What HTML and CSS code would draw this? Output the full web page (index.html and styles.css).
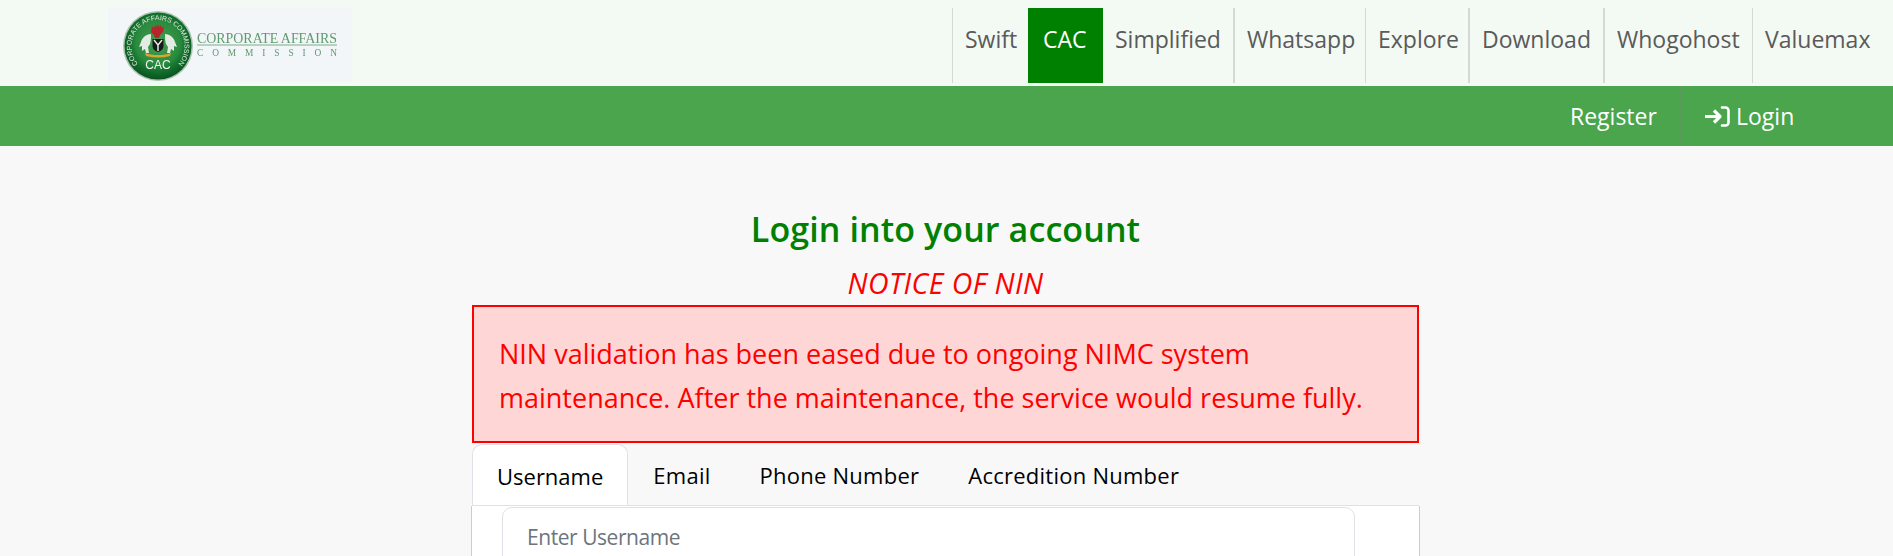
FILE: index.html
```html
<!DOCTYPE html>
<html lang="en">
<head>
<meta charset="utf-8">
<title>Login</title>
<link rel="stylesheet" href="styles.css">
</head>
<body>
<header class="topbar">
  <a class="logo" href="#">
    <svg class="logo-art" viewBox="0 0 244 74" width="244" height="74">
      <defs>
        <radialGradient id="seal" cx="50%" cy="45%" r="55%">
          <stop offset="0" stop-color="#45a052"/>
          <stop offset=".6" stop-color="#2a8a3e"/>
          <stop offset=".78" stop-color="#12702c"/>
          <stop offset="1" stop-color="#0c5222"/>
        </radialGradient>
        <path id="ringtop" d="M 30.5 56.5 A 26.5 26.5 0 1 1 69.5 56.5"/>
      </defs>
      <circle cx="50" cy="38" r="35" fill="#a9c4ae"/>
      <circle cx="50" cy="38" r="33.5" fill="url(#seal)"/>
      <text class="ring" font-size="6.9"><textPath href="#ringtop" startOffset="50%" text-anchor="middle">CORPORATE AFFAIRS COMMISSION</textPath></text>
      <path d="M44 18l2 2 1.500-3 1.500 2 1-3 1 3 1.500-2 1.500 3 2-2-1 6-3 3 -1 3h-4l-1-3-3-3z" fill="#b5252a"/>
      <path d="M44.500 31h11v7q0 4-5.500 6q-5.500-2-5.500-6z" fill="#17191a"/>
      <path d="M46 32l4 5 4-5M50 37v6" stroke="#e8e8e0" stroke-width="1.500" fill="none"/>
      <path d="M43 26c-5 0-9 4-10 8l-2 5 3-1 0 5 3-2 1 4h3l-1-6 2-3c1-3 1-7 1-10z" fill="#e4ebe2"/>
      <path d="M57 26c5 0 9 4 10 8l2 5-3-1 0 5-3-2-1 4h-3l1-6-2-3c-1-3-1-7-1-10z" fill="#e4ebe2"/>
      <path d="M37 45c4 1.500 8 2 13 2s9-.5 13-2l-1 3c-4 1-8 1.500-12 1.500s-8-.5-12-1.500z" fill="#d8a62c"/>
      <text class="seal-name" x="50" y="61" text-anchor="middle" font-size="12">CAC</text>
      <text class="logo-name" x="89" y="35" font-size="14.8" textLength="140" lengthAdjust="spacingAndGlyphs">CORPORATE AFFAIRS</text>
      <rect x="89" y="36.4" width="140" height="1.2" fill="#8fb99a"/>
      <text class="logo-sub" x="89" y="48" font-size="9.4" textLength="140">COMMISSION</text>
    </svg>
  </a>
  <nav class="apps">
    <a class="app" href="#">Swift</a>
    <a class="app app-active" href="#">CAC</a>
    <a class="app app-plain" href="#">Simplified</a>
    <a class="app app-thick" href="#">Whatsapp</a>
    <a class="app" href="#">Explore</a>
    <a class="app app-thick" href="#">Download</a>
    <a class="app app-thick" href="#">Whogohost</a>
    <a class="app" href="#">Valuemax</a>
  </nav>
</header>
<div class="authbar">
  <a class="auth auth-register" href="#">Register</a>
  <a class="auth auth-login" href="#">
    <svg class="login-icon" viewBox="0 0 26 21" width="26" height="21">
      <path d="M1 10.500h14M10 4.500l6 6-6 6" fill="none" stroke="#fff" stroke-width="3.200" stroke-linejoin="round"/>
      <path d="M18 1.500h3.500a3 3 0 0 1 3 3v12a3 3 0 0 1-3 3H18" fill="none" stroke="#fff" stroke-width="2.600" stroke-linecap="round"/>
    </svg>
    <span>Login</span>
  </a>
</div>
<main class="content">
  <h1 class="title">Login into your account</h1>
  <p class="notice-title">NOTICE OF NIN</p>
  <div class="notice">NIN validation has been eased due to ongoing NIMC system maintenance. After the maintenance, the service would resume fully.</div>
  <ul class="tabs">
    <li class="tab tab-active">Username</li>
    <li class="tab">Email</li>
    <li class="tab">Phone Number</li>
    <li class="tab">Accredition Number</li>
  </ul>
  <section class="panel">
    <input class="field" type="text" placeholder="Enter Username">
  </section>
</main>
</body>
</html>
```
FILE: styles.css
```css
* { box-sizing: border-box; }
html, body { height: 100%; }
body {
  margin: 0;
  overflow: hidden;
  background: #f8f8f8;
  font-family: "Open Sans", "Noto Sans", "Liberation Sans", sans-serif;
}
a { text-decoration: none; color: inherit; }

.topbar {
  height: 86px;
  background: #f3f9f3;
  display: flex;
  justify-content: space-between;
  padding: 8px 0 3px 108px;
}
.logo { display: block; width: 244px; height: 74px; background: #f2f6f8; }
.logo-art { display: block; filter: blur(.35px); }
.ring { font-family: "Liberation Sans", sans-serif; fill: #dfeadf; }
.seal-name { font-family: "Liberation Sans", sans-serif; fill: #f2f6f2; }
.logo-name { font-family: "Liberation Serif", serif; fill: #5f9a6f; }
.logo-sub { font-family: "Liberation Serif", serif; fill: #5f9a6f; }

.apps {
  display: grid;
  grid-template-columns: 76px 75px 130px 132px 103px 135px 149px 141px;
  height: 75px;
}
.app {
  padding: 16px 0 0 12px;
  border-left: 1px solid #d5d8d5;
  color: #5a5a5a;
  font-size: 23px;
  line-height: 30px;
  white-space: nowrap;
}
.app-thick { border-left-width: 2px; }
.app-plain { border-left: 0; }
.app-active {
  background: #008000;
  color: #fff;
  border-left: 0;
  padding-left: 15px;
}

.authbar {
  height: 60px;
  background: #4aa54c;
  display: flex;
  justify-content: flex-end;
  padding-right: 76px;
  color: #fff;
  font-size: 23px;
}
.auth {
  display: flex;
  align-items: center;
  border-left: 1px solid #5a9a5d;
}
.auth-register { width: 135px; padding-left: 24px; }
.auth-login { width: 137px; padding-left: 23px; gap: 6px; }
.login-icon { display: block; }

.content { width: 947px; margin-left: 472px; }
.title {
  margin: 0;
  padding-top: 61px;
  text-align: center;
  color: #008000;
  font-size: 34px;
  line-height: 44px;
  font-weight: 600;
  letter-spacing: .1px;
}
.notice-title {
  margin: 0;
  padding-top: 14px;
  text-align: center;
  color: #f00;
  font-size: 28.5px;
  line-height: 36px;
  font-style: italic;
  letter-spacing: .4px;
}
.notice {
  height: 138px;
  margin-top: 4px;
  padding: 25px 24px 0 25px;
  border: 2px solid #f00;
  background: #ffd6d6;
  color: #f00;
  font-size: 27px;
  line-height: 44px;
}
.tabs {
  display: flex;
  height: 62px;
  margin: 1px 0 0;
  padding: 0;
  list-style: none;
  color: #000;
  border-bottom: 1px solid #dee2e6;
  font-size: 22px;
  letter-spacing: .25px;
}
.tab {
  padding: 15px 24px 0 25px;
  line-height: 32px;
  white-space: nowrap;
}
.tab-active {
  padding: 15px 24px 0;
  letter-spacing: 0;
  background: #fff;
  border: 1px solid #dee2e6;
  border-bottom: 0;
  border-radius: 10px 10px 0 0;
}
.panel {
  width: 949px;
  height: 60px;
  margin-left: -1px;
  padding: 1px 64px 0 30px;
  background: #fff;
  border-left: 1px solid #ccc;
  border-right: 1px solid #ccc;
}
.field {
  display: block;
  width: 100%;
  height: 62px;
  padding: 0 24px 2px;
  border: 1px solid #dee2e6;
  border-radius: 10px;
  background: #fff;
  font: inherit;
  font-size: 21px;
  letter-spacing: -.45px;
  outline: 0;
}
.field::placeholder { color: #6c757d; opacity: 1; }
```
